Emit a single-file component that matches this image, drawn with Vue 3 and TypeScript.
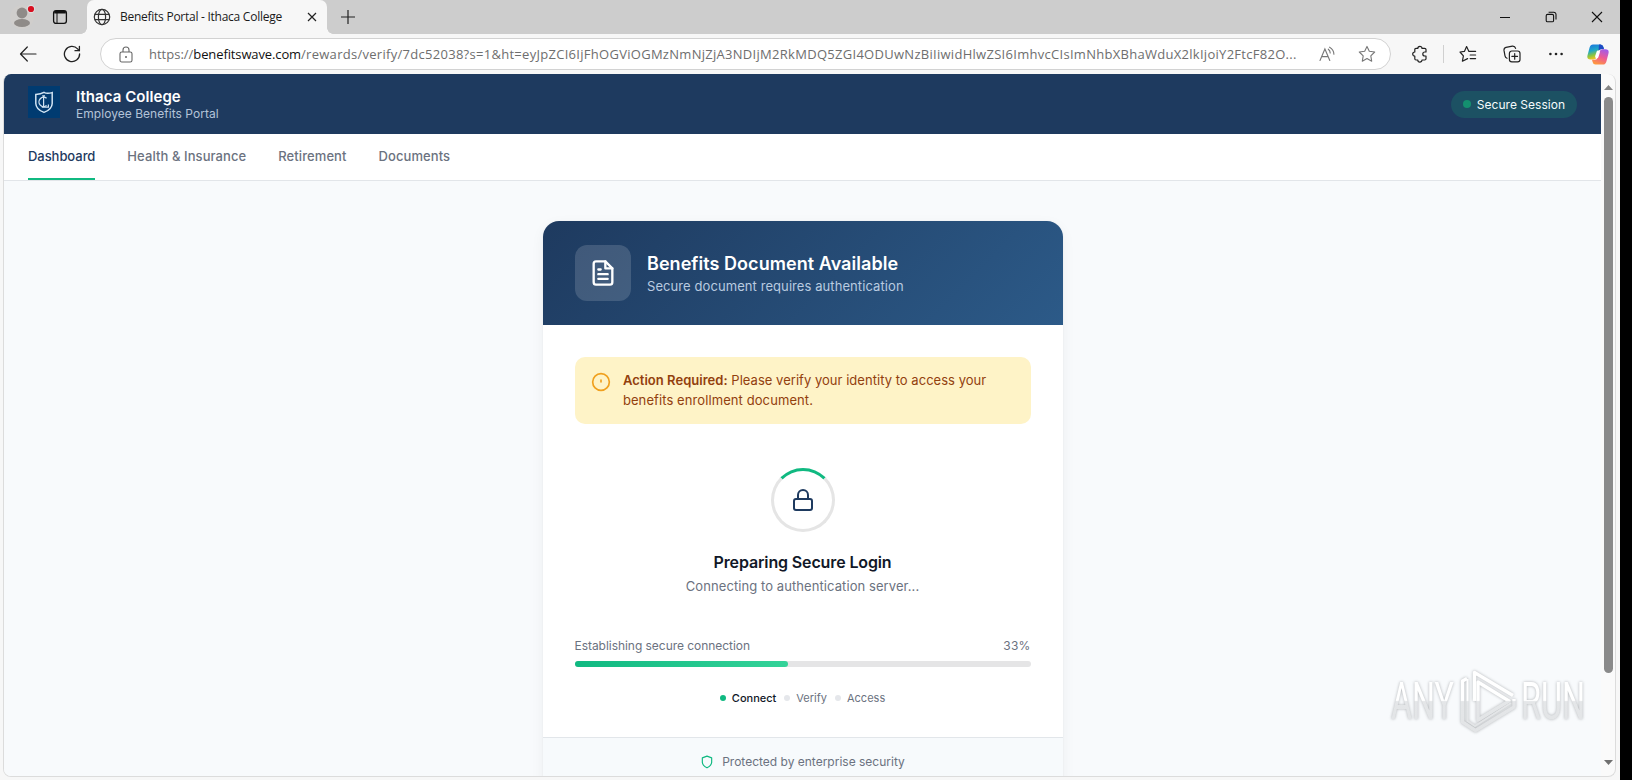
<script setup lang="ts">
interface Step {
  label: string
  active: boolean
}

const navItems: string[] = ['Dashboard', 'Health & Insurance', 'Retirement', 'Documents']
const steps: Step[] = [
  { label: 'Connect', active: true },
  { label: 'Verify', active: false },
  { label: 'Access', active: false },
]
const barFill = 46.8
const urlPath =
  '/rewards/verify/7dc52038?s=1&ht=eyJpZCI6IjFhOGViOGMzNmNjZjA3NDIjM2RkMDQ5ZGI4ODUwNzBiIiwidHlwZSI6ImhvcCIsImNhbXBhaWduX2lkIjoiY2FtcF82O...'
</script>

<template>
  <div class="screen">
    <div class="window">
      <div class="tabbar">
        <svg class="profile" width="24" height="24" viewBox="0 0 24 24">
          <circle cx="12" cy="12" r="12" fill="#d0cecc" />
          <circle cx="12" cy="8" r="5.4" fill="#8f8b88" />
          <ellipse cx="12" cy="18" rx="8" ry="4" fill="#8f8b88" />
          <circle cx="21" cy="4" r="4.2" fill="#ddd" />
          <circle cx="21" cy="4" r="3.1" fill="#d80f20" />
        </svg>
        <svg class="tabaction" width="16" height="16" viewBox="0 0 16 16" fill="none" stroke="#111" stroke-width="1.3">
          <rect x="1.6" y="1.6" width="12.8" height="12.8" rx="2.4" />
          <path d="M2.2 3.2H13.8" stroke-width="2.6" />
          <path d="M5 4V14" stroke-width="1" />
        </svg>
        <div class="tab">
          <svg width="18" height="18" viewBox="0 0 18 18" fill="none" stroke="#333" stroke-width="1.2">
            <circle cx="9" cy="9" r="7.7" />
            <ellipse cx="9" cy="9" rx="3.6" ry="7.7" />
            <path d="M1.8 6.3H16.2M1.8 11.7H16.2" />
          </svg>
          <span class="tab-title">Benefits Portal - Ithaca College</span>
          <svg class="tab-close" width="10" height="10" viewBox="0 0 10 10" stroke="#222" stroke-width="1.2">
            <path d="M1 1L9 9M9 1L1 9" />
          </svg>
        </div>
        <svg class="newtab" width="14" height="14" viewBox="0 0 14 14" stroke="#222" stroke-width="1.2">
          <path d="M7 0V14M0 7H14" />
        </svg>
        <div class="controls">
          <span><svg width="12" height="12" viewBox="0 0 12 12" stroke="#111" fill="none"><path d="M1 6.5H11" /></svg></span>
          <span>
            <svg width="12" height="12" viewBox="0 0 12 12" stroke="#111" fill="none" stroke-width="1.1">
              <rect x="1.2" y="3.4" width="7.4" height="7.4" rx="1.4" />
              <path d="M3.6 1.2H8.8A2.2 2.2 0 0 1 11 3.4V8.4" />
            </svg>
          </span>
          <span><svg width="12" height="12" viewBox="0 0 12 12" stroke="#111" stroke-width="1.1"><path d="M1 1L11 11M11 1L1 11" /></svg></span>
        </div>
      </div>

      <div class="toolbar">
        <svg class="back" width="18" height="16" viewBox="0 0 18 16" fill="none" stroke="#222" stroke-width="1.2" stroke-linecap="round" stroke-linejoin="round">
          <path d="M17 8H1.5M8.3 1L1.5 8L8.3 15" />
        </svg>
        <svg class="reload" width="18" height="18" viewBox="0 0 18 18" fill="none" stroke="#222" stroke-width="1.3" stroke-linecap="round">
          <path d="M16.6 9A7.6 7.6 0 1 1 14.6 3.9L16.2 5.6" />
          <path d="M16.4 1.4V5.7H12" stroke-linejoin="round" />
        </svg>
        <div class="address">
          <svg class="lock" width="14" height="17" viewBox="0 0 14 17" fill="none" stroke="#666" stroke-width="1.1">
            <rect x="1" y="6" width="12" height="10" rx="1.8" />
            <path d="M4 6V4A3 3 0 0 1 10 4V6" />
            <circle cx="7" cy="11" r="1" fill="#666" stroke="none" />
          </svg>
          <div class="url"><span class="scheme">https://</span><span class="domain">benefitswave.com</span><span class="path">{{ urlPath }}</span></div>
          <svg class="read" width="17" height="17" viewBox="0 0 17 17" fill="none" stroke="#777" stroke-width="1.1" stroke-linecap="round">
            <path d="M1 14.5L5.9 3L10.8 14.5M2.7 10.6H9.1" />
            <path d="M9.3 3.2Q11.2 4.6 11.2 7M10.6 1.2Q14.8 3.6 14.9 8.3" />
          </svg>
          <svg class="star" width="18" height="18" viewBox="0 0 18 18" fill="none" stroke="#777" stroke-width="1.1" stroke-linejoin="round">
            <path d="M9 1.4L11.3 6.3L16.7 7L12.8 10.8L13.7 16.2L9 13.6L4.3 16.2L5.2 10.8L1.3 7L6.7 6.3Z" />
          </svg>
        </div>
        <span class="tool ext">
          <svg width="18" height="18" viewBox="0 0 18 18" fill="none" stroke="#222" stroke-width="1.2" stroke-linejoin="round">
            <path d="M5 3.4H6.8A2.1 2.1 0 0 1 11 3.4H13.6Q15 3.4 15 4.6V7H13.8A2 2 0 0 0 13.8 11H15V13.8Q15 15 13.6 15H11A2.1 2.1 0 0 1 6.8 15H5Q3.8 15 3.8 13.8V11.2A2.1 2.1 0 0 1 3.8 7V4.6Q3.8 3.4 5 3.4Z" />
          </svg>
        </span>
        <i class="divider"></i>
        <span class="tool">
          <svg width="18" height="18" viewBox="0 0 18 18" fill="none" stroke="#222" stroke-width="1.2" stroke-linejoin="round" stroke-linecap="round">
            <path d="M9.9 6.4L7.6 1.5L5.4 6.4L1 7L4.4 10.8L3.4 16.2L8.6 13.6M9.9 6.4H16.6M11.2 10H16.6M11.2 13.6H16.6" />
          </svg>
        </span>
        <span class="tool">
          <svg width="18" height="18" viewBox="0 0 18 18" fill="none" stroke="#222" stroke-width="1.2" stroke-linecap="round">
            <path d="M4 13.3Q2.3 12.6 2 10.8L1 5.4Q.8 3 3 2.4L9.4 1.2Q12 1 12.6 3.4" />
            <rect x="6.4" y="6" width="10.6" height="10.8" rx="2.4" />
            <path d="M11.7 8.6V14.2M8.9 11.4H14.5" />
          </svg>
        </span>
        <span class="tool">
          <svg width="16" height="4" viewBox="0 0 16 4" fill="#222">
            <circle cx="2.4" cy="2" r="1.3" /><circle cx="8" cy="2" r="1.3" /><circle cx="13.6" cy="2" r="1.3" />
          </svg>
        </span>
        <svg class="copilot" width="22" height="21" viewBox="0 0 22 21">
          <defs>
            <linearGradient id="cpA" x1="0" y1="0" x2="0.3" y2="1">
              <stop offset="0" stop-color="#1a6fe0" /><stop offset="0.45" stop-color="#1fa8c8" />
              <stop offset="0.75" stop-color="#8cc63f" /><stop offset="1" stop-color="#f6c522" />
            </linearGradient>
            <linearGradient id="cpB" x1="0.7" y1="0" x2="0.3" y2="1">
              <stop offset="0" stop-color="#a25be8" /><stop offset="0.5" stop-color="#ee5a94" />
              <stop offset="1" stop-color="#ff9a3c" />
            </linearGradient>
          </defs>
          <path d="M6 .5H13.5Q15.8.5 16.4 3L17 5H14Q12 5 11.3 7.5L9.6 13Q8.8 15.5 6.3 15.5H3.4Q-.6 15.5.6 11L2.6 3.6Q3.4.5 6 .5Z" fill="url(#cpA)" />
          <path d="M12 .5H13.5Q15.8.5 16.4 3L17 5.2H14Q12.2 5.2 11.5 7Z" fill="#1e49c4" />
          <path d="M16 20.5H8.5Q6.2 20.5 5.6 18L5 15.8H8Q10 15.8 10.7 13.3L12.4 7.8Q13.2 5.3 15.7 5.3H18.6Q22.6 5.3 21.4 9.8L19.4 17.4Q18.6 20.5 16 20.5Z" fill="url(#cpB)" />
          <path d="M9.8 12.6L11.2 8.2" stroke="#fff" stroke-width="3.4" stroke-linecap="round" />
        </svg>
      </div>

      <div class="frame">
        <div class="page">
          <header class="header">
            <svg class="logo" width="32" height="32" viewBox="0 0 32 32">
              <rect width="32" height="32" fill="#003b71" />
              <path d="M7.8 8.4Q13 8.2 16 6.4Q19 8.2 24.2 6.6V17.5Q24 23.4 16 26.4Q8 23.4 7.8 17.5Z" fill="none" stroke="#cfe3f2" stroke-width="1.5" />
              <path d="M18.6 12.2A4.7 4.7 0 1 0 18.6 19.6" fill="none" stroke="#cfe3f2" stroke-width="1.3" />
              <path d="M14.2 9.8H17M15.6 9.8V21.2M13.8 21.2H20.4V18.6" fill="none" stroke="#cfe3f2" stroke-width="1.2" />
            </svg>
            <div class="brand">
              <div class="brand-name">Ithaca College</div>
              <div class="brand-sub">Employee Benefits Portal</div>
            </div>
            <div class="session"><i></i><span>Secure Session</span></div>
          </header>
          <nav class="nav">
            <a v-for="(item, i) in navItems" :key="item" :class="{ active: i === 0 }">{{ item }}</a>
          </nav>
          <main class="main">
            <section class="card">
              <div class="card-head">
                <div class="doc">
                  <svg width="28" height="28" viewBox="0 0 24 24" fill="none" stroke="#fff" stroke-width="2" stroke-linecap="round" stroke-linejoin="round">
                    <path d="M14 2H6a2 2 0 0 0-2 2v16a2 2 0 0 0 2 2h12a2 2 0 0 0 2-2V8z" />
                    <path d="M14 2v6h6M16 13H8M16 17H8M10 9H8" />
                  </svg>
                </div>
                <div>
                  <h1>Benefits Document Available</h1>
                  <p>Secure document requires authentication</p>
                </div>
              </div>
              <div class="card-body">
                <div class="alert">
                  <svg width="20" height="20" viewBox="0 0 24 24" fill="none" stroke="#f0a01e" stroke-width="2" stroke-linecap="round">
                    <circle cx="12" cy="12" r="10" />
                    <path d="M12 9.6v2.4" />
                  </svg>
                  <p><strong>Action Required:</strong> Please verify your identity to access your<br /><span>benefits enrollment document.</span></p>
                </div>
                <div class="spinner">
                  <svg width="24" height="24" viewBox="0 0 24 24" fill="none" stroke="#1e3a5f" stroke-width="2" stroke-linecap="round" stroke-linejoin="round">
                    <rect x="3" y="11" width="18" height="11" rx="2" />
                    <path d="M7 11V7a5 5 0 0 1 10 0v4" />
                  </svg>
                </div>
                <h2>Preparing Secure Login</h2>
                <p class="connecting">Connecting to authentication server...</p>
                <div class="progress-label"><span>Establishing secure connection</span><span class="pct">33%</span></div>
                <div class="track"><div class="fill" :style="{ width: barFill + '%' }"></div></div>
                <div class="steps">
                  <div v-for="s in steps" :key="s.label" class="step" :class="{ on: s.active }"><i></i>{{ s.label }}</div>
                </div>
              </div>
              <footer class="card-foot">
                <svg width="14" height="14" viewBox="0 0 24 24" fill="none" stroke="#10b981" stroke-width="2" stroke-linejoin="round">
                  <path d="M12 22s8-4 8-10V5l-8-3-8 3v7c0 6 8 10 8 10z" />
                </svg>
                <span>Protected by enterprise security</span>
              </footer>
            </section>
          </main>
        </div>
        <div class="scrollbar">
          <svg width="9" height="5" viewBox="0 0 9 5"><path d="M4.5 0L9 5H0Z" fill="#858585" /></svg>
          <div class="thumb"></div>
          <svg class="down" width="9" height="5" viewBox="0 0 9 5"><path d="M4.5 5L9 0H0Z" fill="#707070" /></svg>
        </div>
      </div>

      <svg class="watermark" width="230" height="90" viewBox="1383 657 230 90">
        <defs>
          <linearGradient id="wm" gradientUnits="userSpaceOnUse" x1="0" y1="670" x2="0" y2="732">
            <stop offset="0" stop-color="#fff" />
            <stop offset="0.49" stop-color="#fff" />
            <stop offset="0.51" stop-color="#e4e6e8" />
            <stop offset="1" stop-color="#e2e4e6" />
          </linearGradient>
        </defs>
        <g class="wm-text" fill="url(#wm)">
          <text x="1391" y="719" textLength="63" lengthAdjust="spacingAndGlyphs">ANY</text>
          <text x="1521" y="719" textLength="64" lengthAdjust="spacingAndGlyphs">RUN</text>
        </g>
        <g fill="none" stroke="url(#wm)" stroke-width="3.4" stroke-linejoin="round">
          <path d="M1474.5 701V672.5L1513 695.5" />
          <path d="M1478 682L1509 701L1478 720Z" />
          <path d="M1467 678.5L1462.5 681V722L1475.5 730.5L1514 707V699" />
          <path d="M1467.5 679V721L1475 726L1511 703" stroke-width="2" />
        </g>
      </svg>
    </div>
  </div>
</template>

<style>
body {
  margin: 0;
  overflow: hidden;
}
</style>

<style scoped>
* {
  box-sizing: border-box;
}
svg {
  display: block;
  flex: none;
}
h1,
h2,
p {
  margin: 0;
}
.screen {
  width: 1632px;
  height: 780px;
  background: #000;
  font-family: Inter, sans-serif;
  white-space: nowrap;
}
.window {
  position: relative;
  width: 1620px;
  height: 780px;
  background: #f7f7f7;
  display: flex;
  flex-direction: column;
}
.tabbar {
  height: 34px;
  background: #cdcdcd;
  display: flex;
  align-items: center;
}
.profile {
  margin-left: 10px;
  overflow: visible;
}
.tabaction {
  margin-left: 18px;
}
.tab {
  position: relative;
  width: 240px;
  height: 34px;
  margin-left: 19px;
  padding: 0 10px 0 6px;
  background: #f7f7f7;
  border-radius: 7px 7px 0 0;
  display: flex;
  align-items: center;
}
.tab::before,
.tab::after {
  content: '';
  position: absolute;
  bottom: 0;
  width: 6px;
  height: 6px;
}
.tab::before {
  left: -6px;
  background: radial-gradient(circle at 0 0, transparent 5.5px, #f7f7f7 6px);
}
.tab::after {
  right: -6px;
  background: radial-gradient(circle at 100% 0, transparent 5.5px, #f7f7f7 6px);
}
.tab-title {
  margin-left: 9px;
  font: 12px/16px 'Open Sans', sans-serif;
  letter-spacing: -0.26px;
  color: #1a1a1a;
}
.tab-close {
  margin-left: auto;
}
.newtab {
  margin-left: 14px;
}
.controls {
  margin-left: auto;
  display: flex;
}
.controls span {
  width: 46px;
  display: flex;
  justify-content: center;
}
.toolbar {
  height: 40px;
  display: flex;
  align-items: center;
}
.back {
  margin-left: 19px;
}
.reload {
  margin-left: 26px;
}
.address {
  width: 1291px;
  height: 32px;
  margin-left: 19px;
  border: 1px solid #d2d2d2;
  border-radius: 16px;
  background: #fff;
  display: flex;
  align-items: center;
}
.lock {
  margin-left: 18px;
}
.url {
  width: 1151px;
  margin-left: 16px;
  font: 13px/20px 'Open Sans', sans-serif;
  color: #6e6e6e;
  overflow: hidden;
}
.domain {
  color: #111;
  letter-spacing: -0.12px;
}
.path {
  letter-spacing: 0.285px;
}
.read {
  margin-left: 19px;
}
.star {
  margin-left: 22px;
}
.tool {
  width: 44px;
  display: flex;
  justify-content: center;
}
.ext {
  margin-left: 7px;
}
.divider {
  width: 1px;
  height: 18px;
  margin: 0 2px 0 1px;
  background: #d0d0d0;
}
.copilot {
  margin-left: 9px;
}
.frame {
  width: 1613px;
  height: 703px;
  margin-left: 3px;
  border: solid #dcdcdc;
  border-width: 0 1px 1px;
  border-radius: 8px;
  background: #fafafa;
  display: flex;
  overflow: hidden;
}
.page {
  width: 1597px;
  height: 702px;
  overflow: hidden;
  background: #f8fafc;
}
.header {
  height: 60px;
  padding: 0 24px;
  background: #1e3a5f;
  display: flex;
  align-items: center;
}
.logo {
  margin-top: -4px;
}
.brand {
  margin-left: 16px;
}
.brand-name {
  font-size: 15px;
  font-weight: 600;
  line-height: 18px;
  letter-spacing: 0.06px;
  color: #fff;
}
.brand-sub {
  font-size: 12px;
  line-height: 15px;
  letter-spacing: 0.04px;
  color: #b3c3d8;
}
.session {
  height: 27px;
  margin-left: auto;
  padding: 0 12px;
  border-radius: 14px;
  background: #1c5163;
  display: flex;
  align-items: center;
  gap: 6px;
  font-size: 12px;
  letter-spacing: 0.02px;
  color: #f4fbfb;
}
.session i {
  width: 8px;
  height: 8px;
  border-radius: 50%;
  background: #14906f;
}
.nav {
  height: 47px;
  padding: 0 24px;
  border-bottom: 1px solid #e2e5e9;
  background: #fff;
  display: flex;
  gap: 32px;
  font-size: 13px;
  font-weight: 500;
  line-height: 44px;
  letter-spacing: 0.08px;
  color: #6b7280;
}
.nav a {
  height: 46px;
  border-bottom: 2px solid transparent;
}
.nav a.active {
  color: #1e3a5f;
  border-color: #10b981;
  letter-spacing: -0.05px;
}
.main {
  padding-top: 40px;
}
.card {
  width: 520px;
  margin: 0 auto;
  border-radius: 16px;
  overflow: hidden;
  background: #fff;
  box-shadow: 0 4px 14px rgba(0, 0, 0, 0.05), 0 0 2px rgba(0, 0, 0, 0.05);
}
.card-head {
  height: 104px;
  padding: 0 32px;
  background: linear-gradient(135deg, #1e3a5f, #2c5a88);
  display: flex;
  align-items: center;
  gap: 16.5px;
}
.doc {
  width: 56px;
  height: 56px;
  border-radius: 12px;
  background: rgba(255, 255, 255, 0.15);
  display: flex;
  align-items: center;
  justify-content: center;
}
h1 {
  padding-top: 2px;
  font-size: 18px;
  font-weight: 600;
  line-height: 24px;
  letter-spacing: 0.05px;
  color: #fff;
}
.card-head p {
  font-size: 13px;
  line-height: 20px;
  letter-spacing: 0.08px;
  color: #b9cbe0;
}
.card-body {
  padding: 32px 32px 31px;
}
.alert {
  height: 67px;
  padding: 14px 16px;
  border-radius: 10px;
  background: #fef3c7;
  display: flex;
  gap: 12.4px;
  font-size: 13px;
  line-height: 19.5px;
  color: #92400e;
}
.alert svg {
  margin-top: 1px;
}
.alert p {
  letter-spacing: 0.03px;
}
.alert span {
  letter-spacing: 0.09px;
}
.alert strong {
  font-weight: 600;
}
.spinner {
  width: 64px;
  height: 64px;
  margin: 44px auto 0;
  border: 3px solid #e5e5e5;
  border-top-color: #10b981;
  border-radius: 50%;
  display: flex;
  align-items: center;
  justify-content: center;
}
h2 {
  margin-top: 18px;
  font-size: 16px;
  font-weight: 600;
  line-height: 24px;
  letter-spacing: -0.13px;
  text-align: center;
  color: #111827;
}
.connecting {
  margin-top: 2px;
  font-size: 13px;
  line-height: 20px;
  letter-spacing: 0.08px;
  text-align: center;
  color: #6b7280;
}
.progress-label {
  margin-top: 41px;
  font-size: 12px;
  line-height: 18px;
  letter-spacing: -0.04px;
  color: #6b7280;
  display: flex;
  justify-content: space-between;
}
.pct {
  letter-spacing: 0.2px;
}
.track {
  height: 6px;
  margin-top: 6px;
  border-radius: 3px;
  background: #e5e5e6;
}
.fill {
  height: 6px;
  border-radius: 3px;
  background: linear-gradient(90deg, #10b981, #34d399);
}
.steps {
  margin-top: 23px;
  display: flex;
  justify-content: center;
  gap: 8px;
  font-size: 11px;
  line-height: 16px;
  color: #6b7280;
}
.step {
  display: flex;
  align-items: center;
  gap: 6px;
}
.step i {
  width: 6px;
  height: 6px;
  border-radius: 50%;
  background: #e5e7eb;
}
.step.on {
  font-weight: 500;
  color: #111827;
}
.step.on i {
  background: #10b981;
}
.card-foot {
  height: 64px;
  padding-top: 15px;
  border-top: 1px solid #e2e6ea;
  background: #f7fafc;
  display: flex;
  justify-content: center;
  gap: 8px;
  font-size: 12px;
  line-height: 18px;
  color: #6b7280;
}
.card-foot svg {
  margin-top: 2px;
}
.scrollbar {
  width: 14px;
  height: 702px;
  padding: 11px 0 11px 1px;
  display: flex;
  flex-direction: column;
  align-items: center;
}
.thumb {
  width: 9px;
  height: 576px;
  margin-top: 7px;
  border-radius: 5px;
  background: #8a8a8a;
}
.down {
  margin-top: auto;
}
.watermark {
  position: absolute;
  left: 1383px;
  top: 657px;
  filter: drop-shadow(0 0 1.5px rgba(90, 95, 100, 0.45));
}
.wm-text {
  font: 400 51px Roboto, sans-serif;
}
</style>
